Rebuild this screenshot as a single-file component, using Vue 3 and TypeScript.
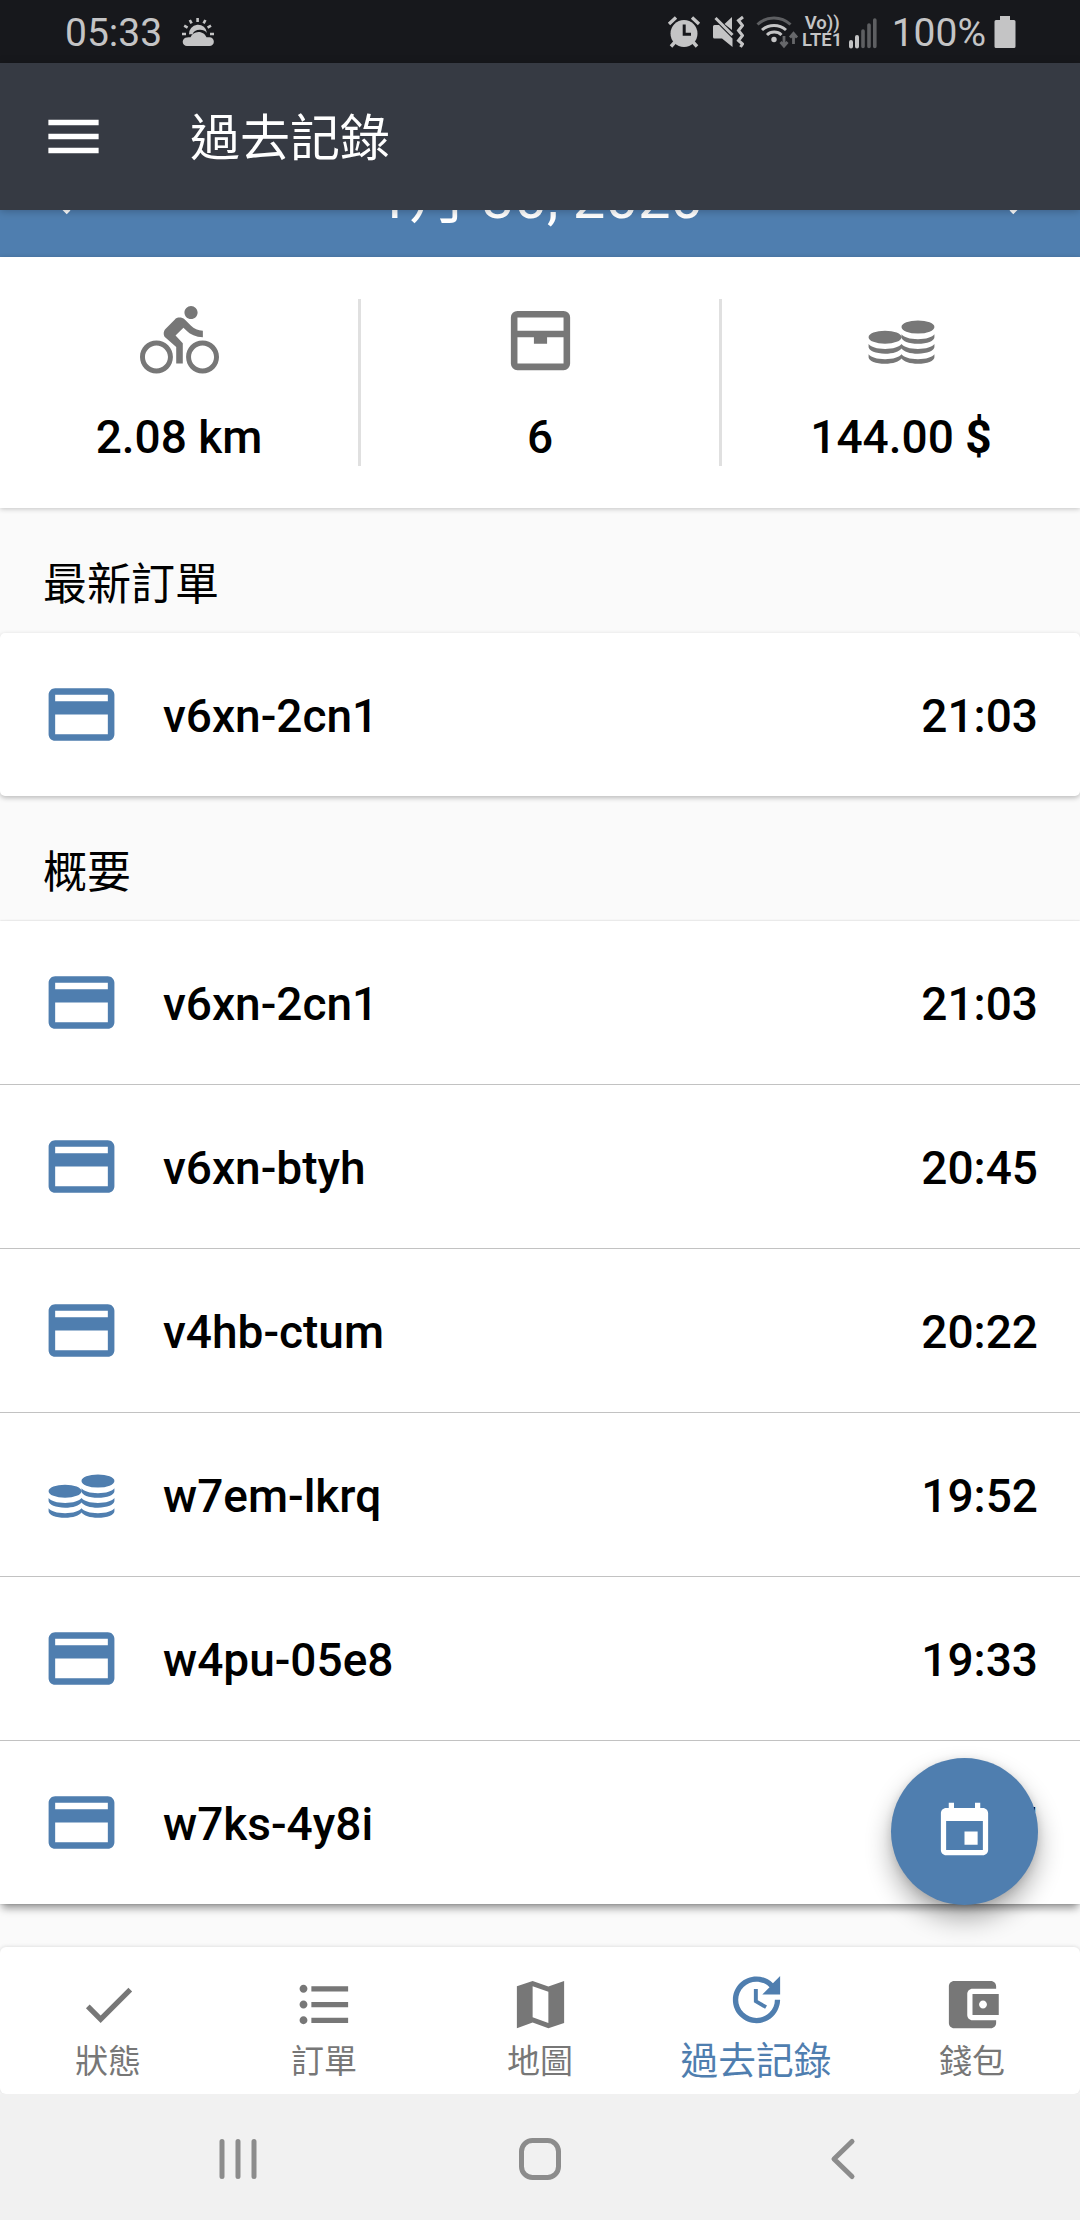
<script setup lang="ts">
type IconName =
  | 'menu' | 'left' | 'right' | 'bike' | 'box' | 'coins' | 'card' | 'event'
  | 'check' | 'list' | 'map' | 'update' | 'wallet'

const icons: Record<IconName, string> = {
  menu: 'M3 18h18v-2H3v2zm0-5h18v-2H3v2zm0-7v2h18V6H3z',
  left: 'M15.41 16.59L10.83 12l4.58-4.59L14 6l-6 6 6 6 1.41-1.41z',
  right: 'M8.59 16.59L13.17 12 8.59 7.41 10 6l6 6-6 6-1.41-1.41z',
  bike: 'M15.5 5.5c1.1 0 2-.9 2-2s-.9-2-2-2-2 .9-2 2 .9 2 2 2zM5 12c-2.8 0-5 2.2-5 5s2.2 5 5 5 5-2.2 5-5-2.2-5-5-5zm0 8.5c-1.9 0-3.5-1.6-3.5-3.5s1.6-3.5 3.5-3.5 3.5 1.6 3.5 3.5-1.6 3.5-3.5 3.5zm5.8-10l2.4-2.4.8.8c1.3 1.3 3 2.1 5.1 2.1V9c-1.5 0-2.7-.6-3.6-1.5l-1.9-1.9c-.5-.4-1-.6-1.6-.6s-1.1.2-1.4.6L7.8 8.4c-.4.4-.6.9-.6 1.4 0 .6.2 1.1.6 1.4L11 14v5h2v-6.2l-2.2-2.3zM19 12c-2.8 0-5 2.2-5 5s2.2 5 5 5 5-2.2 5-5-2.2-5-5-5zm0 8.5c-1.9 0-3.5-1.6-3.5-3.5s1.6-3.5 3.5-3.5 3.5 1.6 3.5 3.5-1.6 3.5-3.5 3.5z',
  box: 'M5 3h14a2 2 0 0 1 2 2v14a2 2 0 0 1-2 2H5a2 2 0 0 1-2-2V5a2 2 0 0 1 2-2zm0 2v4h14V5H5zm0 6v8h14v-8h-5v2h-4v-2H5z',
  coins: 'M2 11a5 2 0 1 0 10 0a5 2 0 1 0-10 0zM12 7.9a5 2 0 1 0 10 0a5 2 0 1 0-10 0zM12 10.1c.6.9 2.6 1.5 5 1.5s4.4-.6 5-1.5v.9c0 1.1-2.2 2-5 2s-5-.9-5-2zM2 13.1c.6.9 2.6 1.5 5 1.5s4.4-.6 5-1.5c.6.9 2.6 1.5 5 1.5s4.4-.6 5-1.5v.9c0 1.1-2.2 2-5 2-2.4 0-4.4-.7-5-1.6-.6.9-2.6 1.6-5 1.6-2.8 0-5-.9-5-2zM2 16.2c.6.9 2.6 1.5 5 1.5s4.4-.6 5-1.5c.6.9 2.6 1.5 5 1.5s4.4-.6 5-1.5v.9c0 1.1-2.2 2-5 2-2.4 0-4.4-.7-5-1.6-.6.9-2.6 1.6-5 1.6-2.8 0-5-.9-5-2z',
  card: 'M20 4H4c-1.11 0-1.99.89-1.99 2L2 18c0 1.11.89 2 2 2h16c1.11 0 2-.89 2-2V6c0-1.11-.89-2-2-2zm0 14H4v-6h16v6zm0-10H4V6h16v2z',
  event: 'M17 12h-5v5h5v-5zM16 1v2H8V1H6v2H5c-1.11 0-1.99.9-1.99 2L3 19c0 1.1.89 2 2 2h14c1.1 0 2-.9 2-2V5c0-1.1-.9-2-2-2h-1V1h-2zm3 18H5V8h14v11z',
  check: 'M9 16.17L4.83 12l-1.42 1.41L9 19 21 7l-1.41-1.41z',
  list: 'M4 10.5c-.83 0-1.5.67-1.5 1.5s.67 1.5 1.5 1.5 1.5-.67 1.5-1.5-.67-1.5-1.5-1.5zm0-6c-.83 0-1.5.67-1.5 1.5S3.17 7.5 4 7.5 5.5 6.83 5.5 6 4.83 4.5 4 4.5zm0 12c-.83 0-1.5.68-1.5 1.5s.68 1.5 1.5 1.5 1.5-.68 1.5-1.5-.67-1.5-1.5-1.5zM7 19h14v-2H7v2zm0-6h14v-2H7v2zm0-8v2h14V5H7z',
  map: 'M3 5l6-2 6 2.1L21 3v16l-6 2-6-2.1L3 21V5zm6 0v11.89L15 19V7.11L9 5z',
  update: 'M21 10.12h-6.78l2.74-2.82c-2.73-2.7-7.15-2.8-9.88-.1-2.73 2.71-2.73 7.08 0 9.79 2.73 2.71 7.15 2.71 9.88 0C18.32 15.65 19 14.08 19 12.1h2c0 1.98-.88 4.55-2.64 6.29-3.51 3.48-9.21 3.48-12.72 0-3.5-3.47-3.53-9.11-.02-12.58 3.51-3.47 9.14-3.47 12.65 0L21 3v7.12zM12.5 8v4.25l3.5 2.08-.72 1.21L11 13V8h1.5z',
  wallet: 'M21 18v1c0 1.1-.9 2-2 2H5c-1.11 0-2-.9-2-2V5c0-1.1.89-2 2-2h14c1.1 0 2 .9 2 2v1h-9c-1.11 0-2 .9-2 2v8c0 1.1.89 2 2 2h9zm-9-2h10V8H12v8zm4-2.5c-.83 0-1.5-.67-1.5-1.5s.67-1.5 1.5-1.5 1.5.67 1.5 1.5-.67 1.5-1.5 1.5z',
}

interface Order { id: string; time: string; icon: IconName }

const stats: { icon: IconName; value: string; currency?: string }[] = [
  { icon: 'bike', value: '2.08 km' },
  { icon: 'box', value: '6' },
  { icon: 'coins', value: '144.00', currency: '$' },
]

const sections: { title: string; orders: Order[] }[] = [
  { title: '最新訂單', orders: [{ id: 'v6xn-2cn1', time: '21:03', icon: 'card' }] },
  {
    title: '概要',
    orders: [
      { id: 'v6xn-2cn1', time: '21:03', icon: 'card' },
      { id: 'v6xn-btyh', time: '20:45', icon: 'card' },
      { id: 'v4hb-ctum', time: '20:22', icon: 'card' },
      { id: 'w7em-lkrq', time: '19:52', icon: 'coins' },
      { id: 'w4pu-05e8', time: '19:33', icon: 'card' },
      { id: 'w7ks-4y8i', time: '19:15', icon: 'card' },
    ],
  },
]

const tabs: { label: string; icon: IconName; active?: boolean }[] = [
  { label: '狀態', icon: 'check' },
  { label: '訂單', icon: 'list' },
  { label: '地圖', icon: 'map' },
  { label: '過去記錄', icon: 'update', active: true },
  { label: '錢包', icon: 'wallet' },
]
</script>

<template>
  <div class="screen">
    <div class="status">
      <span class="clock">05:33</span>
      <svg class="weather" width="34" height="30" viewBox="0 0 34 30">
        <g stroke="#c4c4c5" stroke-width="2.6" fill="none">
          <path d="M16.6 1v4M8.8 3l1.8 3.4M24.4 3l-1.8 3.4M3.2 8.6l3.4 2M30 8.6l-3.4 2M1 17h4M29 17h4" />
        </g>
        <path d="M8 17.5a9 9 0 0 1 18-1.5c-1.600-2-4-3.200-7-3.200-4 0-6.600 1.800-7.600 4.700-1.200-.2-2.400-.2-3.400 0z" fill="#c4c4c5" />
        <path d="M6 29a4.300 4.300 0 0 1 0-8.600c1 0 2 0 3.500-.1 1.500-3.200 4-5.300 8-5.300 4 0 6.800 2.300 8 5.300h3a4.300 4.300 0 0 1 0 8.700z" fill="#c4c4c5" />
      </svg>
      <span class="spacer"></span>
      <svg class="alarm" width="34" height="34" viewBox="0 0 34 34">
        <circle cx="17" cy="18.500" r="13.500" fill="#c4c4c5" />
        <path d="M2 9l7-6.500M32 9l-7-6.500M8 27l-4 4.500M26 27l4 4.500" stroke="#c4c4c5" stroke-width="3.400" />
        <path d="M17.200 9.500v9.800h6.800" stroke="#17181c" stroke-width="3" fill="none" />
      </svg>
      <svg class="mute" width="32" height="34" viewBox="0 0 32 34">
        <path d="M1 11.500q0-1.500 1.500-1.500H7l13.500 13.500V32L10 23.500H2.500Q1 23.500 1 22zM12.500 9L20 2v13z" fill="#c4c4c5" />
        <path d="M3.500 3L20.500 20" stroke="#c4c4c5" stroke-width="3" />
        <path d="M31 2l-4.500 3.500 4 5-4 5 4 5-4 5 4 3.500-2 3" stroke="#c4c4c5" stroke-width="3" fill="none" />
      </svg>
      <svg class="wifi" width="42" height="34" viewBox="0 0 42 34">
        <path d="M1.500 9.500a24 24 0 0 1 33 0" stroke="#5e5f62" stroke-width="3" fill="none" />
        <path d="M6 15a18 18 0 0 1 24 0M11 20a10.500 10.500 0 0 1 14.500 0" stroke="#c4c4c5" stroke-width="3" fill="none" />
        <circle cx="18" cy="24.500" r="2.700" fill="#c4c4c5" />
        <path d="M28 21v9.500M24.500 27l3.500 4 3.500-4M37.500 29v-9.500M34 22.500l3.500-4 3.500 4" stroke="#66676a" stroke-width="2.800" fill="none" />
      </svg>
      <span class="volte"><span class="vo">Vo))</span><span class="lte">LTE1</span></span>
      <svg class="signal" width="28" height="34" viewBox="0 0 28 34">
        <path d="M2 27v4.500M8 22v9.500" stroke="#c4c4c5" stroke-width="4" stroke-linecap="round" />
        <path d="M14 16v15.500M20 10v21.500M25.800 5v26.500" stroke="#5e5f62" stroke-width="3.600" stroke-linecap="round" />
      </svg>
      <span class="percent">100%</span>
      <svg class="battery" width="22" height="34" viewBox="0 0 22 34">
        <path d="M6 1h10v4h4q1.500 0 1.500 1.500v25q0 1.500-1.500 1.500H2q-1.500 0-1.500-1.500v-25Q.5 5 2 5h4z" fill="#c4c4c5" />
      </svg>
    </div>

    <header class="appbar">
      <svg class="menu" viewBox="0 0 24 24"><path :d="icons.menu" /></svg>
      <h1>過去記錄</h1>
    </header>

    <main class="content">
      <div class="datebar">
        <div class="dateinner">
          <svg class="i63" viewBox="0 0 24 24"><path :d="icons.left" /></svg>
          <span class="date">1月 30, 2020</span>
          <svg class="i63" viewBox="0 0 24 24"><path :d="icons.right" /></svg>
        </div>
      </div>

      <div class="stats">
        <div v-for="s in stats" :key="s.icon" class="stat">
          <svg class="i79" viewBox="0 0 24 24"><path :d="icons[s.icon]" fill-rule="evenodd" /></svg>
          <span class="value">{{ s.value }}<template v-if="s.currency">&nbsp;<b>{{ s.currency }}</b></template></span>
        </div>
      </div>

      <section v-for="sec in sections" :key="sec.title">
        <h2>{{ sec.title }}</h2>
        <ul class="card" :class="{ raised: sec.orders.length > 1 }">
          <li v-for="o in sec.orders" :key="o.id" class="row">
            <svg class="i79" viewBox="0 0 24 24"><path :d="icons[o.icon]" /></svg>
            <span class="id">{{ o.id }}</span>
            <span class="time">{{ o.time }}</span>
          </li>
        </ul>
      </section>

      <button class="fab">
        <svg class="i63" viewBox="0 0 24 24"><path :d="icons.event" /></svg>
      </button>
    </main>

    <div class="tabwrap">
      <nav class="tabs">
        <a v-for="t in tabs" :key="t.label" class="tab" :class="{ active: t.active }">
          <svg class="i63" viewBox="0 0 24 24"><path :d="icons[t.icon]" /></svg>
          <span class="label">{{ t.label }}</span>
        </a>
      </nav>
    </div>

    <div class="sysnav">
      <svg width="44" height="44" viewBox="0 0 44 44"><path d="M6 4.600v34.800M22 4.600v34.800M38 4.600v34.800" /></svg>
      <svg width="44" height="44" viewBox="0 0 44 44"><rect x="3.500" y="3.500" width="37" height="37" rx="11" /></svg>
      <svg width="44" height="44" viewBox="0 0 44 44"><path d="M32 4.500L14 22l18 17.500" /></svg>
    </div>
  </div>
</template>

<style>
body {
  margin: 0;
}
</style>

<style scoped>
.screen {
  width: 1080px;
  height: 2220px;
  display: flex;
  flex-direction: column;
  overflow: hidden;
  background: #fafafa;
  color: #000;
  font-family: Roboto, "Noto Sans CJK TC", sans-serif;
}
svg {
  display: block;
  flex: none;
  fill: currentColor;
}
.i63 { width: 63px; height: 63px; }
.i79 { width: 79px; height: 79px; }

.status {
  height: 63px;
  flex: none;
  box-sizing: border-box;
  padding: 0 64px 0 65px;
  display: flex;
  align-items: center;
  background: #17181c;
  color: #c4c4c5;
}
.clock, .percent {
  font-size: 39px;
  line-height: 63px;
  padding-top: 3px;
}
.weather { margin-left: 19px; }
.spacer { flex: 1; }
.mute { margin-left: 11px; }
.wifi { margin-left: 12px; }
.volte {
  margin-left: 4px;
  width: 41px;
  display: flex;
  flex-direction: column;
  align-items: center;
  font-weight: 600;
  white-space: nowrap;
}
.vo { font-size: 18.5px; line-height: 16px; }
.lte { font-size: 18.5px; line-height: 18px; }
.signal { margin-left: 6px; }
.percent { margin-left: 15px; }
.battery { margin-left: 8px; }

.appbar {
  height: 147px;
  flex: none;
  display: flex;
  align-items: center;
  background: #363a43;
  color: #fff;
  box-shadow: 0 1px 8px rgba(0, 0, 0, 0.25);
  z-index: 2;
}
.menu { width: 67px; height: 67px; margin-left: 40px; }
h1 {
  margin: 0 0 0 83px;
  padding-top: 5px;
  font-size: 50px;
  line-height: 60px;
  font-weight: 400;
}

.content {
  position: relative;
  flex: 1;
}
.datebar {
  height: 47px;
  overflow: hidden;
  display: flex;
  align-items: flex-end;
  background: #4f7eaf;
  color: #fff;
}
.dateinner {
  flex: 1;
  height: 118px;
  padding: 0 30px;
  display: flex;
  align-items: center;
  justify-content: space-between;
}
.date { font-size: 58px; line-height: 70px; }

.stats {
  height: 251px;
  box-sizing: border-box;
  padding: 42px 0;
  display: flex;
  background: #fff;
  box-shadow: 0 1px 5px rgba(0, 0, 0, 0.22);
}
.stat {
  flex: 1;
  display: flex;
  flex-direction: column;
  align-items: center;
  color: #777;
}
.stat + .stat { border-left: 3px solid #e0e0e0; }
.stat .i79 { margin-top: 2px; }
.value {
  margin-top: 29px;
  font-size: 46px;
  line-height: 56px;
  font-weight: 500;
  color: #000;
}
.value b { font-weight: 700; }

h2 {
  margin: 0;
  height: 125px;
  box-sizing: border-box;
  padding: 24px 43px 0;
  font-size: 44px;
  line-height: 106px;
  font-weight: 400;
}
.card {
  margin: 0;
  padding: 0;
  list-style: none;
  background: #fff;
  border-radius: 5px;
  box-shadow: 0 2px 5px rgba(0, 0, 0, 0.25);
}
.card.raised {
  border-radius: 0;
  box-shadow: 0 6px 8px -2px rgba(0, 0, 0, 0.42), 0 0 2px rgba(0, 0, 0, 0.18);
}
.row {
  height: 163px;
  padding: 0 42px;
  display: flex;
  align-items: center;
  font-size: 46px;
  font-weight: 500;
}
.row + .row { border-top: 1px solid #c2c2c2; }
.row .i79 { color: #4f7eaf; }
.id, .time { padding-top: 3px; line-height: 56px; }
.id { margin-left: 42px; flex: 1; }

.fab {
  position: absolute;
  right: 42px;
  bottom: 42px;
  width: 147px;
  height: 147px;
  border: 0;
  padding: 0;
  border-radius: 50%;
  display: flex;
  align-items: center;
  justify-content: center;
  background: #4f7eaf;
  color: #fff;
  box-shadow: 0 14px 26px rgba(0, 0, 0, 0.32), 0 2px 8px rgba(0, 0, 0, 0.12);
}

.tabwrap {
  height: 147px;
  flex: none;
  z-index: 1;
}
.tabs {
  height: 147px;
  display: flex;
  background: #fff;
  border-radius: 6px;
  box-shadow: 0 0 4px rgba(0, 0, 0, 0.15);
}
.tab {
  flex: 1 0 0;
  display: flex;
  flex-direction: column;
  align-items: center;
  padding-top: 26px;
  color: #777;
}
.label {
  margin-top: 3px;
  font-size: 33px;
  line-height: 46px;
  white-space: nowrap;
}
.tab.active { padding-top: 21px; color: #4f7eaf; }
.active .label { margin-top: 7px; font-size: 37.7px; }

.sysnav {
  height: 126px;
  flex: none;
  box-sizing: border-box;
  padding: 4px 216px 0;
  display: flex;
  align-items: center;
  justify-content: space-between;
  background: #f1f1f1;
  z-index: 2;
}
.sysnav svg {
  fill: none;
  stroke: #8c8c8c;
  stroke-width: 5;
  stroke-linecap: round;
  stroke-linejoin: round;
}
</style>
